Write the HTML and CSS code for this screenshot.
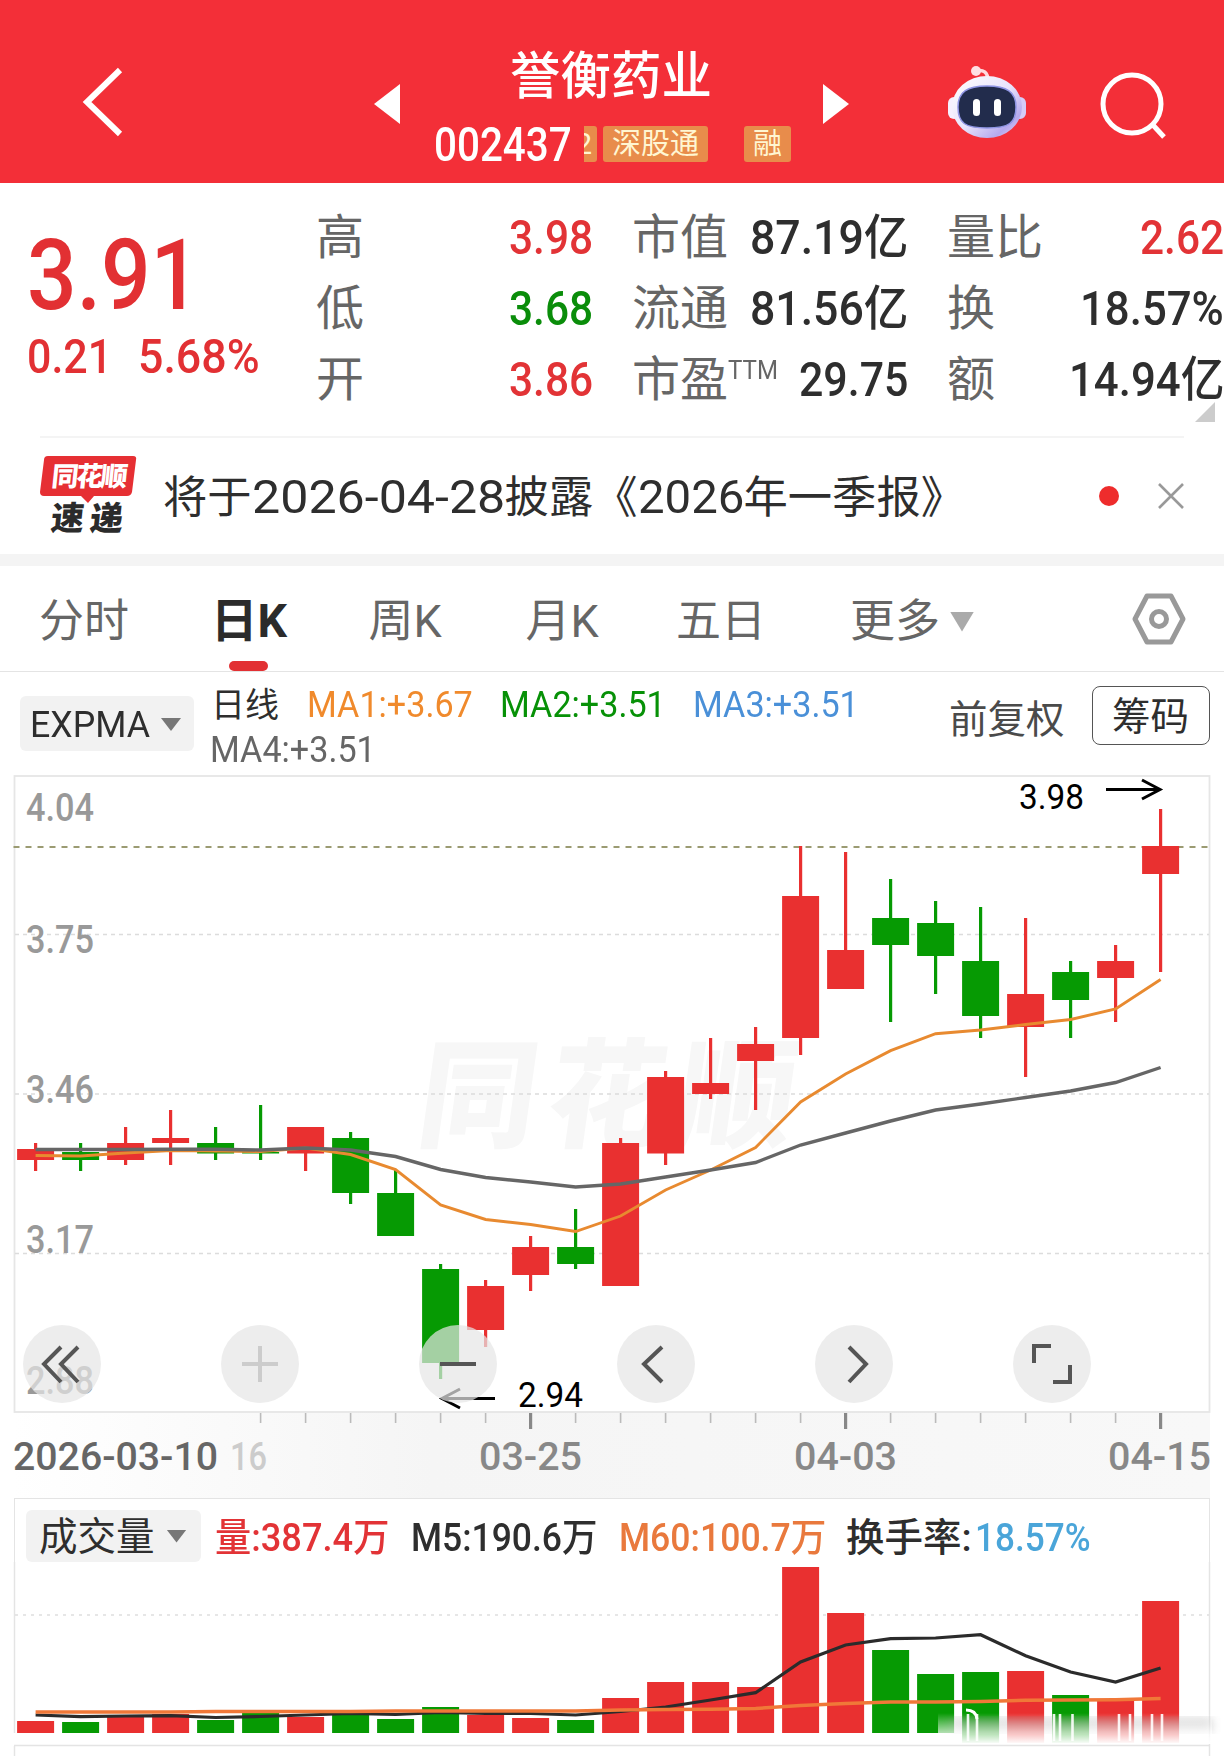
FILE: index.html
```html
<!DOCTYPE html>
<html lang="zh-CN">
<head>
  <meta charset="UTF-8">
  <meta name="viewport" content="width=device-width, initial-scale=1.0">
  <title>誉衡药业 002437</title>
  <link rel="stylesheet" href="styles.css">
</head>
<body>

<header class="topbar">
  <svg class="back" width="46" height="76" viewBox="0 0 46 76"><path d="M40 6L7 38L40 70" fill="none" stroke="#fff" stroke-width="6"/></svg>
  <svg class="prev" width="26" height="40" viewBox="0 0 26 40"><path d="M0 20L26 0V40Z" fill="#fff"/></svg>
  <div class="stock">
    <div class="stock-name"><span class="fit" data-w="202">誉衡药业</span></div>
    <div class="stock-info">
      <span class="stock-code fit" data-w="138">002437</span>
      <span class="tag tag-cut"><i>2</i></span>
      <span class="tag tag-sgt">深股通</span>
      <span class="tag tag-rong">融</span>
    </div>
  </div>
  <svg class="next" width="26" height="40" viewBox="0 0 26 40"><path d="M26 20L0 0V40Z" fill="#fff"/></svg>
  <svg class="robot" width="80" height="76" viewBox="0 0 80 76">
    <defs>
      <linearGradient id="head" x1="0" y1="0" x2="1" y2="1">
        <stop offset="0" stop-color="#fff"/><stop offset=".5" stop-color="#e9e4fb"/><stop offset=".8" stop-color="#b5a9ee"/><stop offset="1" stop-color="#f4d9ec"/>
      </linearGradient>
    </defs>
    <path d="M29 7C36 5 41 8 41 17" fill="none" stroke="#ffd9de" stroke-width="3.5"/>
    <circle cx="29" cy="7" r="5" fill="#ffdfe3"/>
    <rect x="1" y="33" width="12" height="22" rx="6" fill="#f6f0ff"/>
    <rect x="67" y="33" width="12" height="22" rx="6" fill="#d5ccf8"/>
    <ellipse cx="40" cy="43" rx="35" ry="31" fill="url(#head)"/>
    <path d="M40 22C60 22 69 28 69 43C69 59 62 64 40 64C18 64 11 59 11 43C11 28 20 22 40 22Z" fill="#222c4c" stroke="#8f95e4" stroke-width="1.5"/>
    <rect x="26" y="35" width="7" height="17" rx="3.5" fill="#fff"/>
    <rect x="47" y="35" width="7" height="17" rx="3.5" fill="#fff"/>
  </svg>
  <svg class="search" width="72" height="72" viewBox="0 0 72 72"><circle cx="33" cy="33" r="29" fill="none" stroke="#fff" stroke-width="5"/><path d="M53 53L65 66" stroke="#fff" stroke-width="5"/></svg>
</header>

<section class="quote">
  <div class="price-box">
    <div class="price"><span class="fit" data-w="173">3.91</span></div>
    <div class="change"><span class="fit" data-w="85">0.21</span><span class="fit" data-w="122">5.68%</span></div>
  </div>
  <div class="stats">
    <div class="stat"><label>高</label><b class="fit red" data-w="84">3.98</b></div>
    <div class="stat"><label>市值</label><b class="fit" data-w="158">87.19亿</b></div>
    <div class="stat"><label>量比</label><b class="fit red" data-w="84">2.62</b></div>
    <div class="stat"><label>低</label><b class="fit green" data-w="84">3.68</b></div>
    <div class="stat"><label>流通</label><b class="fit" data-w="158">81.56亿</b></div>
    <div class="stat"><label>换</label><b class="fit" data-w="144">18.57%</b></div>
    <div class="stat"><label>开</label><b class="fit red" data-w="84">3.86</b></div>
    <div class="stat"><label>市盈<sup class="fit" data-w="50">TTM</sup></label><b class="fit" data-w="109">29.75</b></div>
    <div class="stat"><label>额</label><b class="fit" data-w="155">14.94亿</b></div>
  </div>
  <span class="corner"></span>
</section>

<section class="news">
  <svg class="news-logo" width="100" height="82" viewBox="0 0 100 82">
    <path d="M10 1H95Q99 1 98 5L94 37Q93 41 89 41H56L50 48L43 41H6Q2 41 2 37L6 5Q6 1 10 1Z" fill="#e62f33"/>
    <g transform="skewX(-6)">
      <text x="16" y="31" font-size="27" font-weight="900" fill="#fff" textLength="76">同花顺</text>
      <text x="20" y="75" font-size="33" font-weight="900" fill="#2b2b2b" textLength="72">速递</text>
    </g>
  </svg>
  <div class="news-text">将于<span class="fit" data-w="253">2026-04-28</span>披露《<span class="fit" data-w="106">2026</span>年一季报》</div>
  <span class="dot"></span>
  <svg class="close" width="26" height="26" viewBox="0 0 26 26"><path d="M1 1L25 25M25 1L1 25" stroke="#999" stroke-width="2.6"/></svg>
</section>

<nav class="tabs">
  <div class="tab">分时</div>
  <div class="tab active">日K</div>
  <div class="tab">周K</div>
  <div class="tab">月K</div>
  <div class="tab">五日</div>
  <div class="tab more">更多<span class="caret"></span></div>
  <svg class="setting" width="54" height="54" viewBox="0 0 54 54"><path d="M15 4H39L51 27L39 50H15L3 27Z" fill="none" stroke="#999" stroke-width="5" stroke-linejoin="round"/><circle cx="27" cy="27" r="7.5" fill="none" stroke="#999" stroke-width="5"/></svg>
</nav>

<section class="indicator">
  <div class="chip"><span class="fit" data-w="120">EXPMA</span><i class="caret"></i></div>
  <div class="legend">
    <span class="legend-title">日线</span>
    <span class="fit ma1" data-w="166">MA1:+3.67</span>
    <span class="fit ma2" data-w="166">MA2:+3.51</span>
    <span class="fit ma3" data-w="166">MA3:+3.51</span>
    <span class="fit ma4" data-w="166">MA4:+3.51</span>
  </div>
  <div class="fuquan">前复权</div>
  <div class="chouma">筹码</div>
</section>

<section class="chart">
  <svg id="kline" width="1224" height="723" viewBox="0 775 1224 723"></svg>
  <div class="tools">
    <div class="tool"><svg width="78" height="78" viewBox="0 0 78 78"><path d="M38 22L21 39L38 57M55 22L38 39L55 57"/></svg></div>
    <div class="tool off"><svg width="78" height="78" viewBox="0 0 78 78"><path d="M21 39H57M39 21V57"/></svg></div>
    <div class="tool"><svg width="78" height="78" viewBox="0 0 78 78"><path d="M21 39H57"/></svg></div>
    <div class="tool"><svg width="78" height="78" viewBox="0 0 78 78"><path d="M45 22L27 39L45 57"/></svg></div>
    <div class="tool"><svg width="78" height="78" viewBox="0 0 78 78"><path d="M34 22L51 39L34 57"/></svg></div>
    <div class="tool"><svg width="78" height="78" viewBox="0 0 78 78"><path d="M38 21H21V38M57 40V57H40"/></svg></div>
  </div>
</section>

<section class="volume">
  <div class="volume-head">
    <div class="chip">成交量<i class="caret"></i></div>
    <span class="fit red" data-w="174">量:387.4万</span>
    <span class="fit" data-w="186">M5:190.6万</span>
    <span class="fit orange" data-w="207">M60:100.7万</span>
    <span class="fit" data-w="126">换手率:</span>
    <span class="fit blue" data-w="116">18.57%</span>
  </div>
  <svg id="vol" width="1224" height="194" viewBox="0 1562 1224 194"></svg>
</section>

<script>
  const RED = '#e93030', GREEN = '#069a03';
  const X0 = 35.6, STEP = 45, BODY = 37;
  const cx = i => X0 + STEP * i;

  // color, body top, body bottom, high, low, volume top
  const days = [
    ['r', 1149, 1160, 1143, 1171, 1721],
    ['g', 1152, 1160, 1143, 1171, 1722],
    ['r', 1143, 1160, 1127, 1165, 1717],
    ['r', 1138, 1143, 1110, 1165, 1714],
    ['g', 1143, 1153.5, 1127, 1160, 1720],
    ['g', 1152, 1153.5, 1105, 1160, 1712],
    ['r', 1127, 1153.5, 1127, 1171, 1717],
    ['g', 1138, 1193, 1132, 1204, 1714],
    ['g', 1193, 1236, 1170, 1236, 1719],
    ['g', 1269, 1363, 1264, 1379, 1707],
    ['r', 1286, 1330, 1280, 1347, 1715],
    ['r', 1247, 1275, 1236, 1291, 1718],
    ['g', 1247, 1264, 1209, 1269, 1720],
    ['r', 1143, 1286, 1138, 1286, 1698],
    ['r', 1077, 1153.5, 1071, 1165, 1682],
    ['r', 1083, 1094, 1038, 1099, 1682],
    ['r', 1044, 1061, 1027, 1110, 1687],
    ['r', 896, 1038, 846, 1055, 1567],
    ['r', 950, 989, 852, 989, 1613],
    ['g', 918, 945, 879, 1022, 1650],
    ['g', 923, 956, 901, 994, 1674],
    ['g', 961, 1016, 907, 1038, 1672],
    ['r', 994, 1027, 918, 1077, 1671],
    ['g', 972, 1000, 961, 1038, 1695],
    ['r', 961, 978, 945, 1022, 1700],
    ['r', 846, 874, 809, 972, 1601]
  ];
  const ma1 = [1155.5, 1156, 1153, 1150.5, 1151, 1151.5, 1148, 1154.5, 1169.5, 1205, 1219.5, 1224.5, 1231.5, 1216, 1190, 1170, 1147.5, 1102, 1074, 1050.7, 1033.7, 1030, 1024.5, 1019.5, 1009, 979.5];
  const ma4 = [1149.5, 1149.5, 1149.5, 1149.3, 1149.3, 1150, 1148, 1150, 1156.5, 1169.5, 1177.5, 1182, 1187, 1184, 1177, 1170, 1162.5, 1145, 1133, 1121, 1110, 1104, 1097.5, 1091, 1082.5, 1067.5];
  const m5 = [1715, 1716.7, 1716, 1715.7, 1717.5, 1716.5, 1715, 1713.5, 1714.5, 1712.5, 1713.5, 1713.5, 1715, 1711.5, 1707, 1700, 1692.7, 1662, 1645, 1638.7, 1638, 1634.7, 1655.7, 1672, 1682, 1668];
  const m60 = [1712, 1712, 1712, 1712, 1711.5, 1711.5, 1711.5, 1711.5, 1711, 1711, 1711, 1711, 1711, 1710, 1709.5, 1709.2, 1708.5, 1705.5, 1703.5, 1702, 1702, 1701.5, 1700.3, 1700, 1699.7, 1698.5];

  function rect(x, y, w, h, fill) {
    return `<rect x="${x}" y="${y}" width="${w}" height="${h}" fill="${fill}"/>`;
  }
  function line(x1, y1, x2, y2, stroke, w = 1.5, dash = '') {
    return `<line x1="${x1}" y1="${y1}" x2="${x2}" y2="${y2}" stroke="${stroke}" stroke-width="${w}" stroke-dasharray="${dash}"/>`;
  }
  function poly(ys, stroke, w) {
    return `<polyline points="${ys.map((y, i) => cx(i) + ',' + y).join(' ')}" fill="none" stroke="${stroke}" stroke-width="${w}"/>`;
  }
  function text(x, y, w, size, fill, str, weight = 500) {
    return `<text x="${x}" y="${y}" textLength="${w}" lengthAdjust="spacingAndGlyphs" font-size="${size}" font-weight="${weight}" fill="${fill}">${str}</text>`;
  }

  function drawKline() {
    let s = '<defs><linearGradient id="fade" x1="0" x2="1" y1="0" y2="0"><stop offset="0" stop-color="#fff"/><stop offset=".35" stop-color="#f5f5f5"/><stop offset="1" stop-color="#f8f8f8"/></linearGradient></defs>';
    s += rect(14, 1412, 1196, 86, 'url(#fade)');
    s += '<rect x="14.5" y="776" width="1195" height="636" fill="#fff" stroke="#e6e6e6" stroke-width="1.8"/>';
    s += '<text class="mark" transform="translate(436 1138) skewX(-8)" x="-22" y="0" textLength="376">同花顺</text>';
    [934.5, 1094, 1253.5].forEach(y => s += line(15, y, 1209, y, '#dcdcdc', 1.3, '4 4'));
    s += line(13.5, 847, 1209, 847, '#9b9b72', 2, '6 6');
    [['4.04', 821], ['3.75', 953], ['3.46', 1103], ['3.17', 1253], ['2.88', 1394]].forEach(l => s += text(26, l[1], 68, 38, '#999', l[0]));
    days.forEach((d, i) => {
      const c = d[0] === 'r' ? RED : GREEN;
      s += rect(cx(i) - 1.6, d[3], 3.2, d[4] - d[3], c) + rect(cx(i) - BODY / 2, d[1], BODY, d[2] - d[1], c);
    });
    s += poly(ma1, '#e88a30', 2.9) + poly(ma4, '#666', 3.4);
    s += text(1019, 809, 65, 35, '#000', '3.98', 400);
    s += '<path d="M1106 789.5H1160M1142 780L1160 789.5L1142 799" fill="none" stroke="#000" stroke-width="3"/>';
    s += text(518, 1407, 65, 35, '#000', '2.94', 400);
    s += '<path d="M495 1398.5H442M460 1389L442 1398.5L460 1408" fill="none" stroke="#000" stroke-width="3"/>';
    for (let i = 5; i < 26; i++) {
      const major = i === 11 || i === 18 || i === 25;
      s += line(cx(i), 1413, cx(i), major ? 1429 : 1423, major ? '#888' : '#bbb', major ? 3.2 : 1.6);
    }
    s += text(13, 1470, 205, 38, '#666', '2026-03-10');
    s += text(230, 1470, 37, 38, '#ccc', '16');
    s += text(479, 1470, 103, 38, '#888', '03-25') + text(794, 1470, 103, 38, '#888', '04-03') + text(1108, 1470, 103, 38, '#888', '04-15');
    document.getElementById('kline').innerHTML = s;
  }

  function drawVolume() {
    let s = '<defs><linearGradient id="haze" x1="0" x2="0" y1="0" y2="1"><stop offset="0" stop-color="#fff" stop-opacity="0"/><stop offset=".6" stop-color="#fff" stop-opacity=".65"/><stop offset="1" stop-color="#fff"/></linearGradient><filter id="soft"><feGaussianBlur stdDeviation="5"/></filter></defs>';
    s += line(14.5, 1562, 14.5, 1733, '#e4e4e4') + line(1209.5, 1562, 1209.5, 1756, '#e4e4e4') + line(14.5, 1746, 14.5, 1756, '#e4e4e4');
    s += line(15, 1615, 1209, 1615, '#dedede', 1.5, '3 5');
    days.forEach((d, i) => s += rect(cx(i) - BODY / 2, d[5], BODY, 1733 - d[5], d[0] === 'r' ? RED : GREEN));
    days.slice(21).forEach((d, i) => s += rect(cx(i + 21) - BODY / 2, 1733, BODY, 10, d[0] === 'r' ? RED : GREEN));
    s += poly(m5, '#2b2b2b', 3.2) + poly(m60, '#f07838', 3.4);
    // channel mark haze in the corner
    s += '<rect x="950" y="1718" width="262" height="14" fill="#777" opacity=".3" filter="url(#soft)"/>';
    s += rect(938, 1713, 274, 31, 'url(#haze)');
    [968, 977, 1054, 1060, 1072.5, 1119, 1130, 1152, 1162].forEach(x => s += line(x, 1714, x, 1741, 'rgba(255,255,255,.9)', 2.6));
    s += '<path d="M966 1710Q976 1710 977 1719" fill="none" stroke="#fff" stroke-width="3"/>';
    s += line(14, 1745.5, 1210, 1745.5, '#e4e4e4');
    document.getElementById('vol').innerHTML = s;
  }

  function fitText() {
    document.querySelectorAll('.fit').forEach(el => {
      const k = el.dataset.w / el.offsetWidth;
      el.style.width = el.dataset.w + 'px';
      el.style.transform = `scaleX(${k})`;
    });
  }

  drawKline();
  drawVolume();
  fitText();
</script>

</body>
</html>
```

FILE: styles.css
```css
* { box-sizing: border-box; }
html, body {
  margin: 0;
  padding: 0;
}
body {
  width: 1224px;
  height: 1756px;
  overflow: hidden;
  background: #fff;
  color: #2e2e2e;
  font-family: Roboto, "Noto Sans CJK SC", sans-serif;
}
svg { display: block; flex: none; }
i { font-style: normal; }
.fit {
  display: inline-block;
  flex: none;
  white-space: nowrap;
  transform-origin: 0 50%;
}
.red { color: #e23336; }
.green { color: #0a8d0a; }
.orange { color: #e9793d; }
.blue { color: #4aa5d9; }
.caret {
  width: 20px;
  height: 13px;
  background: #777;
  clip-path: polygon(0 0, 100% 0, 50% 100%);
}

/* header */
.topbar {
  display: flex;
  align-items: flex-start;
  height: 183px;
  background: #f32f38;
  color: #fff;
}
.back { margin: 64px 0 0 80px; }
.prev { margin: 84px 0 0 248px; }
.stock { width: 357px; margin: 46px 0 0 34px; }
.stock-name {
  padding-left: 76px;
  line-height: 62px;
  font-size: 51px;
  font-weight: 500;
}
.stock-info { display: flex; height: 36px; margin-top: 18px; }
.stock-code { line-height: 37px; font-size: 48px; font-weight: 500; }
.tag {
  height: 36px;
  border-radius: 3px;
  background: #e88c4b;
  color: #fff6d2;
  font-size: 29px;
  line-height: 37px;
  text-align: center;
}
.tag-cut {
  width: 13px;
  margin-left: 12px;
  overflow: hidden;
  border-radius: 0 3px 3px 0;
}
.tag-cut i { display: block; margin-left: -13px; }
.tag-sgt { width: 105px; margin-left: 6px; }
.tag-rong { width: 47px; margin-left: 36px; }
.next { margin: 84px 0 0 32px; }
.robot { margin: 64px 0 0 98px; }
.search { margin: 71px 0 0 72px; }

/* quote */
.quote {
  position: relative;
  display: flex;
  height: 253px;
  padding-top: 17px;
}
.price-box { flex: none; width: 289px; margin-left: 27px; color: #e23033; }
.price {
  height: 115px;
  padding-top: 34px;
  font-size: 98px;
  line-height: 83px;
  font-weight: 500;
}
.change {
  display: flex;
  gap: 26px;
  font-size: 48px;
  font-weight: 500;
  line-height: 84px;
}
.stats {
  display: grid;
  flex: none;
  grid-template-columns: 277px 276px 277px;
  grid-auto-rows: 71px;
  column-gap: 39px;
}
.stat {
  display: flex;
  justify-content: space-between;
  font-size: 48px;
  line-height: 75px;
}
.stat label { color: #666; white-space: nowrap; }
.stat b { font-weight: 500; }
.stat sup {
  font-size: 26px;
  line-height: 30px;
  vertical-align: 17px;
}
.corner {
  position: absolute;
  right: 9px;
  bottom: 14px;
  width: 20px;
  height: 20px;
  background: #ccc;
  clip-path: polygon(100% 0, 100% 100%, 0 100%);
}

/* news */
.news {
  display: flex;
  align-items: center;
  height: 118px;
  margin: 0 40px;
  border-top: 2px solid #f4f4f4;
}
.news-logo { margin-left: -2px; }
.news-text {
  width: 936px;
  margin-left: 25px;
  font-size: 44.3px;
  line-height: 60px;
  padding-top: 3px;
  white-space: nowrap;
}
.news-text .fit { font-size: 46px; }
.dot {
  width: 20px;
  height: 20px;
  margin-left: 3px;
  border-radius: 50%;
  background: #ee2c2c;
}
.close { margin-left: 39px; }

/* tabs */
.tabs {
  display: grid;
  grid-template-columns: 168px 168px 138px 176px 142px 340px 54px;
  height: 118px;
  border-top: 12px solid #f4f4f4;
  border-bottom: 1px solid #e4e4e4;
  font-size: 45px;
  line-height: 111px;
  text-align: center;
  color: #666;
}
.active {
  position: relative;
  padding-right: 6px;
  color: #2b2b2b;
  font-size: 46.5px;
  font-weight: 700;
}
.active::after {
  content: "";
  position: absolute;
  left: 61px;
  top: 95px;
  width: 39px;
  height: 10px;
  border-radius: 5px;
  background: #e23033;
}
.more {
  display: flex;
  align-items: center;
  padding-left: 58px;
}
.more .caret {
  width: 24px;
  height: 20px;
  margin-left: 10px;
  background: #aaa;
}
.setting { margin-top: 26px; }

/* indicator row */
.indicator {
  display: flex;
  height: 103px;
}
.chip {
  display: flex;
  align-items: center;
  border-radius: 6px;
  background: #f2f2f2;
}
.indicator .chip {
  width: 174px;
  height: 55px;
  margin: 24px 0 0 20px;
  padding: 2px 0 0 10px;
  font-size: 36px;
}
.chip .caret { margin-left: 11px; }
.legend {
  display: flex;
  flex-wrap: wrap;
  align-content: flex-start;
  width: 700px;
  margin: 11px 0 0 17px;
  font-size: 36px;
  line-height: 45px;
}
.legend-title { font-size: 34px; line-height: 45px; width: 68px; }
.ma1 { margin-left: 28px; color: #f08a2c; }
.ma2 { margin-left: 27px; color: #079107; }
.ma3 { margin: 0 50px 0 27px; color: #4a90d8; }
.ma4 { margin-left: -1px; color: #666; }
.fuquan {
  margin: 18px 0 0 38px;
  font-size: 38.5px;
  line-height: 60px;
  color: #4a4a4a;
}
.chouma {
  width: 118px;
  height: 59px;
  margin: 14px 0 0 27px;
  border: 1.5px solid #555;
  border-radius: 8px;
  font-size: 38.5px;
  line-height: 59px;
  text-align: center;
}

/* charts */
.chart { position: relative; height: 723px; }
.mark { font-size: 118px; font-weight: 900; fill: #f7f7f7; }
.tools {
  position: absolute;
  left: 23px;
  top: 550px;
  display: flex;
  gap: 120px;
}
.tool {
  border-radius: 50%;
  background: rgba(230, 230, 230, .71);
}
.tool path { fill: none; stroke: #555; stroke-width: 4; }
.tool.off path { stroke: #ccc; }

.volume-head {
  display: flex;
  height: 64px;
  margin: 0 14px;
  padding: 11px 0 0 11px;
  border: 1.5px solid #e4e4e4;
  border-bottom: 0;
  font-size: 38.5px;
  line-height: 55px;
}
.volume-head .chip { width: 175px; height: 52px; margin-right: 14px; padding-left: 13px; }
.volume-head .chip .caret { margin-left: 12px; }
.volume-head > .fit { margin-right: 22px; font-weight: 500; }
.volume-head > .fit:nth-child(4) { margin-right: 20px; }
.volume-head > .fit:nth-child(5) { margin-right: 3px; }
```
